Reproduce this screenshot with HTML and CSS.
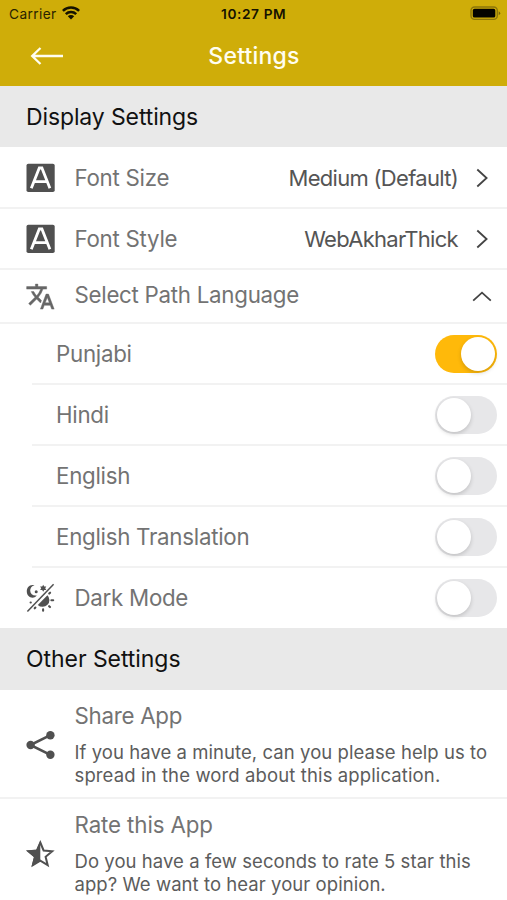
FILE: index.html
```html
<!DOCTYPE html>
<html lang="en">
<head>
<meta charset="utf-8">
<title>Settings</title>
<link rel="stylesheet" href="styles.css">
</head>
<body>
<svg class="defs" width="0" height="0" aria-hidden="true">
  <symbol id="letter" viewBox="0 0 30 30"><rect x="1.5" y=".8" width="28.2" height="28.2" rx="1.8" fill="#505050"/><path d="M6.3 25.3 14.3 5h2.6l8 20.3M9.2 18.6h12.8" fill="none" stroke="#fff" stroke-width="2.8"/></symbol>
  <symbol id="next" viewBox="0 0 20 20"><path d="m5.3 1.5 9.3 8.5-9.3 8.5" fill="none" stroke="#444" stroke-width="1.8"/></symbol>
</svg>
<header class="top">
  <div class="status">
    <span class="carrier">Carrier</span>
    <svg class="wifi" width="18" height="14" viewBox="0 0 18 14"><g fill="none" stroke="#161300" stroke-width="2.5"><path d="M.9 4.8a11.6 11.6 0 0 1 16.2 0"/><path d="M3.8 8.1a7.4 7.4 0 0 1 10.4 0"/></g><path d="M9 13.6 5.8 10.3a4.6 4.6 0 0 1 6.4 0Z" fill="#161300"/></svg>
    <b class="time">10:27 PM</b>
    <svg class="battery" width="31" height="15" viewBox="0 0 31 15"><rect x="1" y="1" width="26.3" height="12.4" rx="3.6" fill="none" stroke="#8c760a" stroke-width="1.4"/><rect x="2.8" y="2.8" width="22.5" height="8.8" rx="1.7" fill="#050400"/><path d="M28.7 5.2q3 2 0 4Z" fill="#766207"/></svg>
  </div>
  <nav class="nav">
    <svg class="back" width="34" height="20" viewBox="0 0 34 20"><path d="M10.5 2 2.2 10l8.3 8M2.5 10H33" fill="none" stroke="#fffef0" stroke-width="2.3"/></svg>
    <h1>Settings</h1>
  </nav>
</header>
<main>
  <h2>Display Settings</h2>
  <div class="row first"><svg class="icon"><use href="#letter"/></svg><span class="label">Font Size</span><span class="value">Medium (Default)</span><svg class="chev"><use href="#next"/></svg></div>
  <div class="row"><svg class="icon"><use href="#letter"/></svg><span class="label">Font Style</span><span class="value">WebAkharThick</span><svg class="chev"><use href="#next"/></svg></div>
  <div class="row language">
    <svg class="icon" viewBox="0 0 30 30"><path transform="translate(.4 .6) scale(1.25)" fill="#666" stroke="#666" stroke-width=".35" d="m12.87 15.07-2.54-2.51.03-.03A17.52 17.52 0 0 0 14.07 6H17V4h-7V2H8v2H1v2h11.17C11.5 7.92 10.44 9.75 9 11.35 8.07 10.32 7.3 9.19 6.69 8h-2c.73 1.63 1.73 3.17 2.98 4.56l-5.09 5.02L4 19l5-5 3.11 3.11.76-2.04zM18.5 10h-2L12 22h2l1.12-3h4.75L21 22h2l-4.5-12zm-2.62 7 1.62-4.33L19.12 17h-3.24z"/></svg>
    <span class="label">Select Path Language</span>
    <svg class="chev" viewBox="0 0 20 20"><path d="m1.2 14.7 8.8-8 8.8 8" fill="none" stroke="#444" stroke-width="1.8"/></svg>
  </div>
  <div class="sub"><span class="label">Punjabi</span><i class="toggle on"></i></div>
  <div class="sub"><span class="label">Hindi</span><i class="toggle"></i></div>
  <div class="sub"><span class="label">English</span><i class="toggle"></i></div>
  <div class="sub"><span class="label">English Translation</span><i class="toggle"></i></div>
  <div class="row dark">
    <svg class="icon" viewBox="0 0 30 30"><g fill="#505050"><path d="M9.5 2.2C4.5 1 1.6 4.6 1.8 8.8c.2 4.6 4.7 7.2 8.4 5.1l1.6-1.5C8 13 5.4 10.9 5.2 7.7 5.1 5.1 6.7 2.9 9.5 2.2Z"/><circle cx="11.2" cy="8.8" r="1.5"/><path d="m18.2 1.8 1 1.8 2.1-.1-1.1 1.8 1.1 1.8-2.1-.1-1 1.8-1-1.8-2.1.1 1.1-1.8-1.1-1.8 2.1.1Z"/><path d="M22.4 12.2a6.5 6.5 0 0 1-9.6 9.7Z"/></g><g fill="none" stroke="#505050" stroke-width="1.5"><path d="M28.6 1.2 2.4 28.5"/><path stroke-width="2.1" stroke-linecap="round" d="m24.2 10.6.9-.9M26.4 17.2h1.8M24.1 23.2l.9.9M18.1 26.4v1.4M10.4 24.6l-.7.7M5.6 19.5h.2"/></g></svg>
    <span class="label">Dark Mode</span><i class="toggle"></i>
  </div>
  <h2 class="other">Other Settings</h2>
  <div class="card">
    <svg class="icon" viewBox="0 0 30 30"><path d="M25.4 5.2 5.4 15l20 9.8" fill="none" stroke="#505050" stroke-width="2.6"/><g fill="#505050"><circle cx="25.4" cy="5.2" r="4.2"/><circle cx="5.6" cy="15" r="4.2"/><circle cx="25.4" cy="24.8" r="4.2"/></g></svg>
    <div><span class="label">Share App</span><p>If you have a minute, can you please help us to<br><span class="second">spread in the word about this application.</span></p></div>
  </div>
  <div class="card">
    <svg class="icon" viewBox="0 0 30 30"><path d="m15.3 3.5 3.3 8 8.6.7-6.6 5.6 2.1 8.4-7.4-4.5-7.4 4.5 2.1-8.4-6.6-5.6 8.6-.7Z" fill="#fff" stroke="#505050" stroke-width="2"/><path d="M15.3 2v20L6.5 27.5 9 18.1l-7.7-6.5 10.1-.9Z" fill="#505050"/></svg>
    <div><span class="label rate">Rate this App</span><p>Do you have a few seconds to rate 5 star this<br>app? We want to hear your opinion.</p></div>
  </div>
</main>
</body>
</html>
```
FILE: styles.css
```css
* { box-sizing: border-box; }
body { margin: 0; width: 507px; height: 900px; overflow: hidden; background: #fff; font-family: Inter, "Liberation Sans", sans-serif; color: #737373; }
.defs { display: block; }
.top { height: 86px; background: #cfad09; }
.status { height: 27px; display: grid; grid-template-columns: 53px 1fr 66px 1fr 53px; align-items: center; padding: 0 6px 0 9px; color: #292300; font-size: 13.7px; letter-spacing: .4px; white-space: nowrap; }
.time { color: #151200; font-size: 13.7px; font-weight: 600; letter-spacing: .6px; margin-left: -1px; }
.wifi { margin-top: -2px; }
.status .battery { grid-column: 5; justify-self: end; }
.nav { height: 59px; display: grid; grid-template-columns: 34px 1fr 34px; align-items: center; padding: 0 30px; }
.back { margin-top: -2px; }
h1 { margin: 0 0 1px 1px; text-align: center; color: #fffef0; font-size: 23px; font-weight: 500; letter-spacing: .2px; }
h2 { margin: 0; height: 61px; padding-left: 26px; line-height: 63px; background: #e9e9e9; color: #111; font-size: 23px; font-weight: 400; letter-spacing: -.12px; }
.other { height: 62px; letter-spacing: -.06px; }
.row { height: 61px; display: flex; align-items: center; padding: 0 15px 0 25px; border-bottom: 2px solid #f2f2f2; }
.first { height: 62px; padding-top: 1px; }
.icon { flex: none; width: 30px; height: 30px; margin-right: 19.5px; }
.label { font-size: 22.3px; line-height: 28px; white-space: nowrap; letter-spacing: -.27px; }
.value { margin-left: auto; color: #555; font-size: 22px; letter-spacing: -.7px; white-space: nowrap; }
.chev { flex: none; width: 20px; height: 20px; margin-left: 14px; }
.language { height: 54px; }
.language .label { margin-top: -3px; }
.language .chev { margin-left: auto; }
.sub { height: 61px; margin-left: 32px; padding: 0 10px 0 24px; display: flex; align-items: center; justify-content: space-between; border-bottom: 2px solid #f2f2f2; }
.toggle { flex: none; width: 62px; height: 38px; padding: 2px; border-radius: 19px; background: #e7e7e9; }
.toggle::before { content: ""; display: block; width: 34px; height: 34px; border-radius: 50%; background: #fff; box-shadow: 0 2px 4px rgba(0,0,0,.17); }
.on { background: #ffb90a; }
.on::before { margin-left: 24px; }
.dark { height: 60px; padding-right: 10px; border: 0; }
.dark .toggle { margin-left: auto; }
.card { height: 109px; padding: 12px 0 0 25px; display: flex; border-bottom: 2px solid #f2f2f2; }
.card .icon { margin-top: 28px; }
.card .label { display: block; }
.card .rate { letter-spacing: -.1px; }
.card p { margin: 11px 0 0; color: #5c5c5c; font-size: 18.5px; line-height: 23px; white-space: nowrap; letter-spacing: .06px; }
.second { letter-spacing: .12px; }
```
